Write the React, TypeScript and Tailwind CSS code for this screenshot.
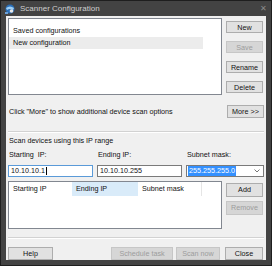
import React from 'react';

const font = { fontFamily: '"Liberation Sans", Arial, sans-serif' };

function Btn({ label, disabled, className = '' }: { label: string; disabled?: boolean; className?: string }) {
    return (
        <div
            className={
                'flex items-center justify-center border text-[7.2px] leading-none ' +
                (disabled
                    ? 'border-[#c6c6c6] bg-[#d6d6d6] text-[#9c9c9c] '
                    : 'border-[#adadad] bg-[#e1e1e1] text-[#111] ') +
                className
            }>
            {label}
        </div>
    );
}

function Etched() {
    return (
        <div className="flex flex-col">
            <div className="h-px bg-[#d2d2d2]" />
            <div className="h-px bg-white" />
        </div>
    );
}

export default function App() {
    return (
        <div
            style={font}
            className="flex h-[266px] w-[272px] flex-col border border-[#1e1e1e] bg-[#434343]">
            {/* title bar */}
            <div className="flex h-[19px] items-center pl-[3px] pr-[4px]">
                <svg width="12" height="12" viewBox="0 0 12 12">
                    <circle cx="6" cy="6" r="4.5" fill="#2a6fb8" />
                    <path d="M2 5 Q6 2 10 5 L9 7 Q6 5 3 7 Z" fill="#9fd0f5" />
                    <circle cx="7.5" cy="8" r="1.8" fill="#e8e8e8" />
                    <rect x="1" y="9" width="3" height="2" fill="#6aa0d8" />
                </svg>
                <span className="ml-[4px] text-[8px] text-[#cfcfcf]">Scanner Configuration</span>
                <span className="ml-auto text-[8px] leading-none text-[#8a8a8a]">✕</span>
            </div>
            {/* body */}
            <div className="mx-[5px] mb-[5px] flex flex-1 flex-col bg-[#f0f0f0] px-[2px] pt-[2px] text-[7.2px] text-[#111]">
                <div className="flex">
                    <div className="flex h-[77px] w-[214px] flex-col border border-[#828790] bg-white pt-[5px]">
                        <div className="flex h-[13px] w-[194px] items-center pl-[4px]">Saved configurations</div>
                        <div className="flex h-[12px] w-[194px] items-center bg-[#ececec] pl-[4px]">New configuration</div>
                    </div>
                    <div className="ml-[4px] mt-[3px] flex w-[37px] flex-col gap-[8px]">
                        <Btn label="New" className="h-[12px]" />
                        <Btn label="Save" disabled className="h-[12px]" />
                        <Btn label="Rename" className="h-[12px]" />
                        <Btn label="Delete" className="h-[12px]" />
                    </div>
                </div>

                <div className="mt-[10px] flex items-center">
                    <span className="flex-1 pl-px">Click "More" to show additional device scan options</span>
                    <Btn label="More >>" className="h-[13px] w-[37px]" />
                </div>

                <div className="mt-[13px]">
                    <Etched />
                </div>

                <div className="mt-[3px] pl-px">Scan devices using this IP range</div>

                <div className="mt-[3px] flex gap-[4px]">
                    <div className="flex w-[85px] flex-col gap-[4px]">
                        <span className="pl-px">Starting&nbsp; IP:</span>
                        <div className="flex h-[12px] items-center border border-[#5a9ad8] bg-white pl-[2px]">
                            10.10.10.1<span className="ml-px h-[8px] w-px bg-black" />
                        </div>
                    </div>
                    <div className="flex w-[85px] flex-col gap-[4px]">
                        <span className="pl-px">Ending IP:</span>
                        <div className="flex h-[12px] items-center border border-[#7a7a7a] bg-white pl-[2px]">
                            10.10.10.255
                        </div>
                    </div>
                    <div className="flex flex-1 flex-col gap-[4px]">
                        <span className="pl-px">Subnet mask:</span>
                        <div className="flex h-[12px] items-center border border-[#7a7a7a] bg-white pl-[1px] pr-[3px]">
                            <span className="bg-[#3390ff] px-px text-white">255.255.255.0</span>
                            <svg className="ml-auto" width="6" height="4" viewBox="0 0 6 4">
                                <path d="M0.5 0.5 L3 3 L5.5 0.5" fill="none" stroke="#555" strokeWidth="0.8" />
                            </svg>
                        </div>
                    </div>
                </div>

                <div className="mt-[4px] flex">
                    <div className="flex h-[48px] w-[214px] flex-col border border-[#828790] bg-white">
                        <div className="flex h-[14px]">
                            <div className="flex w-[63px] items-center pl-[4px]">Starting IP</div>
                            <div className="flex w-[66px] items-center bg-[#d9ebf9] pl-[4px]">Ending IP</div>
                            <div className="flex w-[64px] items-center border-r border-[#e5e5e5] pl-[4px]">Subnet mask</div>
                        </div>
                    </div>
                    <div className="ml-[4px] mt-[2px] flex w-[37px] flex-col gap-[4px]">
                        <Btn label="Add" className="h-[14px]" />
                        <Btn label="Remove" disabled className="h-[14px]" />
                    </div>
                </div>

                <div className="mt-[8px]">
                    <Etched />
                </div>

                <div className="mt-[8px] flex">
                    <Btn label="Help" className="h-[13px] w-[45px]" />
                    <Btn label="Schedule task" disabled className="ml-[58px] h-[13px] w-[62px]" />
                    <Btn label="Scan now" disabled className="ml-[3px] h-[13px] w-[44px]" />
                    <Btn label="Close" className="ml-[5px] h-[13px] w-[38px]" />
                </div>
            </div>
        </div>
    );
}
